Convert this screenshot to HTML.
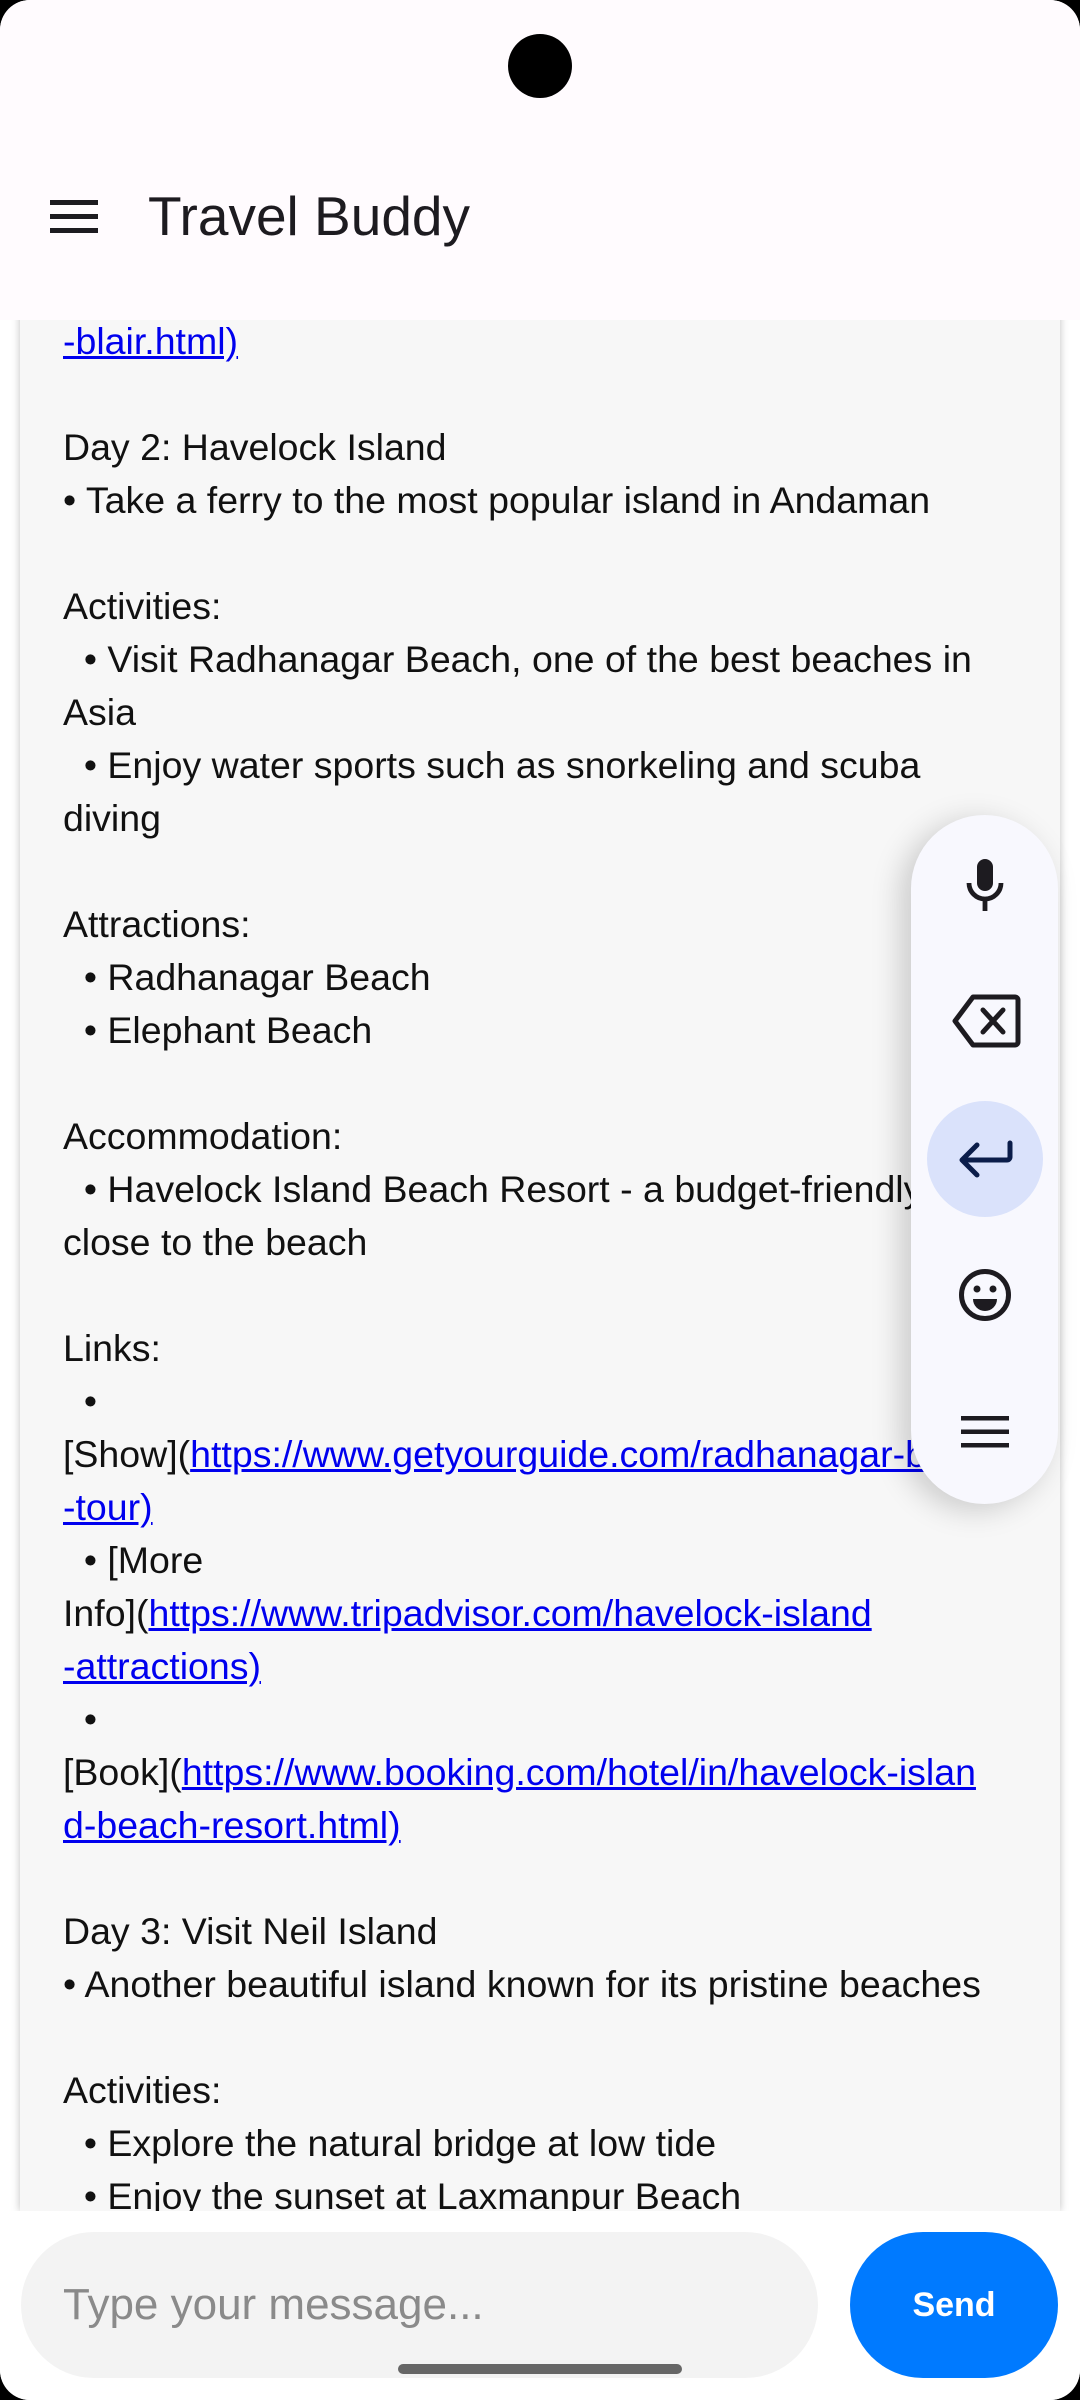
<!DOCTYPE html>
<html><head><meta charset="utf-8"><style>
html,body{margin:0;padding:0;background:#000;}
#s{position:relative;width:1080px;height:2400px;overflow:hidden;background:#fff;border-radius:30px;font-family:"Liberation Sans",sans-serif;}
#hdr{position:absolute;left:0;top:0;width:1080px;height:320px;background:#fffbfe;z-index:5;}
#cam{position:absolute;left:508px;top:34px;width:64px;height:64px;border-radius:50%;background:#000;}
#title{position:absolute;left:148px;top:184px;font-size:55px;color:#1d1b20;line-height:64px;}
#card{position:absolute;left:20px;top:300px;width:1040px;height:1911px;background:#f7f7f7;box-shadow:0 0 8px rgba(0,0,0,.25);overflow:hidden;z-index:1;}
#txt{position:absolute;left:43px;top:15px;width:980px;}
#txt div{height:53px;line-height:53px;font-size:37.5px;color:#111;white-space:pre;}
a{color:#0000ee;text-decoration:underline;}
#bot{position:absolute;left:0;top:2211px;width:1080px;height:189px;background:#fff;z-index:3;}
#inp{position:absolute;left:21px;top:21px;width:797px;height:146px;border-radius:73px;background:#f3f3f3;}
#ph{position:absolute;left:42px;top:0;line-height:146px;font-size:44px;color:#8a8a8a;}
#send{position:absolute;left:850px;top:21px;width:208px;height:146px;border-radius:73px;background:#007aff;color:#fff;font-weight:bold;font-size:34px;text-align:center;line-height:146px;}
#bar{position:absolute;left:398px;top:153px;width:284px;height:10px;border-radius:5px;background:#666;}
#fab{position:absolute;left:911px;top:815px;width:147px;height:689px;border-radius:74px;background:#f8f8fe;box-shadow:-10px 6px 30px rgba(0,0,0,.18);z-index:4;}
#fab svg{position:absolute;}
#hl{position:absolute;left:16px;top:286px;width:116px;height:116px;border-radius:58px;background:#dae2fb;}
</style></head><body><div id="s">
<div id="hdr"><div id="cam"></div>
<svg style="position:absolute;left:50px;top:198px" width="48" height="36" viewBox="0 0 48 36"><rect x="0" y="2" width="48" height="5" fill="#1d1b20"/><rect x="0" y="16" width="48" height="5" fill="#1d1b20"/><rect x="0" y="30" width="48" height="5" fill="#1d1b20"/></svg>
<div id="title">Travel Buddy</div></div>
<div id="card"><div id="txt">
<div><a>-blair.html)</a></div>
<div> </div>
<div>Day 2: Havelock Island</div>
<div>• Take a ferry to the most popular island in Andaman</div>
<div> </div>
<div>Activities:</div>
<div>  • Visit Radhanagar Beach, one of the best beaches in</div>
<div>Asia</div>
<div>  • Enjoy water sports such as snorkeling and scuba</div>
<div>diving</div>
<div> </div>
<div>Attractions:</div>
<div>  • Radhanagar Beach</div>
<div>  • Elephant Beach</div>
<div> </div>
<div>Accommodation:</div>
<div>  • Havelock Island Beach Resort - a budget-friendly option</div>
<div>close to the beach</div>
<div> </div>
<div>Links:</div>
<div>  •</div>
<div>[Show](<a>https://www.getyourguide.com/radhanagar-beach</a></div>
<div><a>-tour)</a></div>
<div>  • [More</div>
<div>Info](<a>https://www.tripadvisor.com/havelock-island</a></div>
<div><a>-attractions)</a></div>
<div>  •</div>
<div>[Book](<a>https://www.booking.com/hotel/in/havelock-islan</a></div>
<div><a>d-beach-resort.html)</a></div>
<div> </div>
<div>Day 3: Visit Neil Island</div>
<div>• Another beautiful island known for its pristine beaches</div>
<div> </div>
<div>Activities:</div>
<div>  • Explore the natural bridge at low tide</div>
<div>  • Enjoy the sunset at Laxmanpur Beach</div>
</div></div>
<div id="fab"><div id="hl"></div>
<svg style="left:50px;top:40px" width="48" height="64" viewBox="0 0 24 32"><rect x="8" y="2" width="8" height="16" rx="4" fill="#1d1b20"/><path d="M4 14a8 8 0 0 0 16 0" fill="none" stroke="#1d1b20" stroke-width="2.4"/><rect x="10.8" y="21" width="2.4" height="7" fill="#1d1b20"/></svg>
<svg style="left:40px;top:178px" width="70" height="56" viewBox="0 0 70 56"><path d="M22 4H64a3 3 0 0 1 3 3V49a3 3 0 0 1-3 3H22L4 28Z" fill="none" stroke="#1d1b20" stroke-width="5" stroke-linejoin="round"/><path d="M32 17L52 39M52 17L32 39" stroke="#1d1b20" stroke-width="5" stroke-linecap="round"/></svg>
<svg style="left:44px;top:322px" width="60" height="44" viewBox="0 0 60 44"><path d="M55 6V20a3 3 0 0 1-3 3H8M22 8L7 23L22 38" fill="none" stroke="#0b1d4a" stroke-width="5" stroke-linecap="round" stroke-linejoin="round"/></svg>
<svg style="left:47px;top:453px" width="54" height="54" viewBox="0 0 54 54"><circle cx="27" cy="27" r="23.5" fill="none" stroke="#1d1b20" stroke-width="5"/><circle cx="19" cy="21" r="3.5" fill="#1d1b20"/><circle cx="35" cy="21" r="3.5" fill="#1d1b20"/><path d="M15 31h24a12 12 0 0 1-24 0Z" fill="#1d1b20"/></svg>
<svg style="left:50px;top:601px" width="48" height="32" viewBox="0 0 48 32"><rect x="0" y="0" width="48" height="4.5" fill="#1d1b20"/><rect x="0" y="13.5" width="48" height="4.5" fill="#1d1b20"/><rect x="0" y="27" width="48" height="4.5" fill="#1d1b20"/></svg>
</div>
<div id="bot"><div id="inp"><div id="ph">Type your message...</div></div><div id="send">Send</div><div id="bar"></div></div>
</div></body></html>
